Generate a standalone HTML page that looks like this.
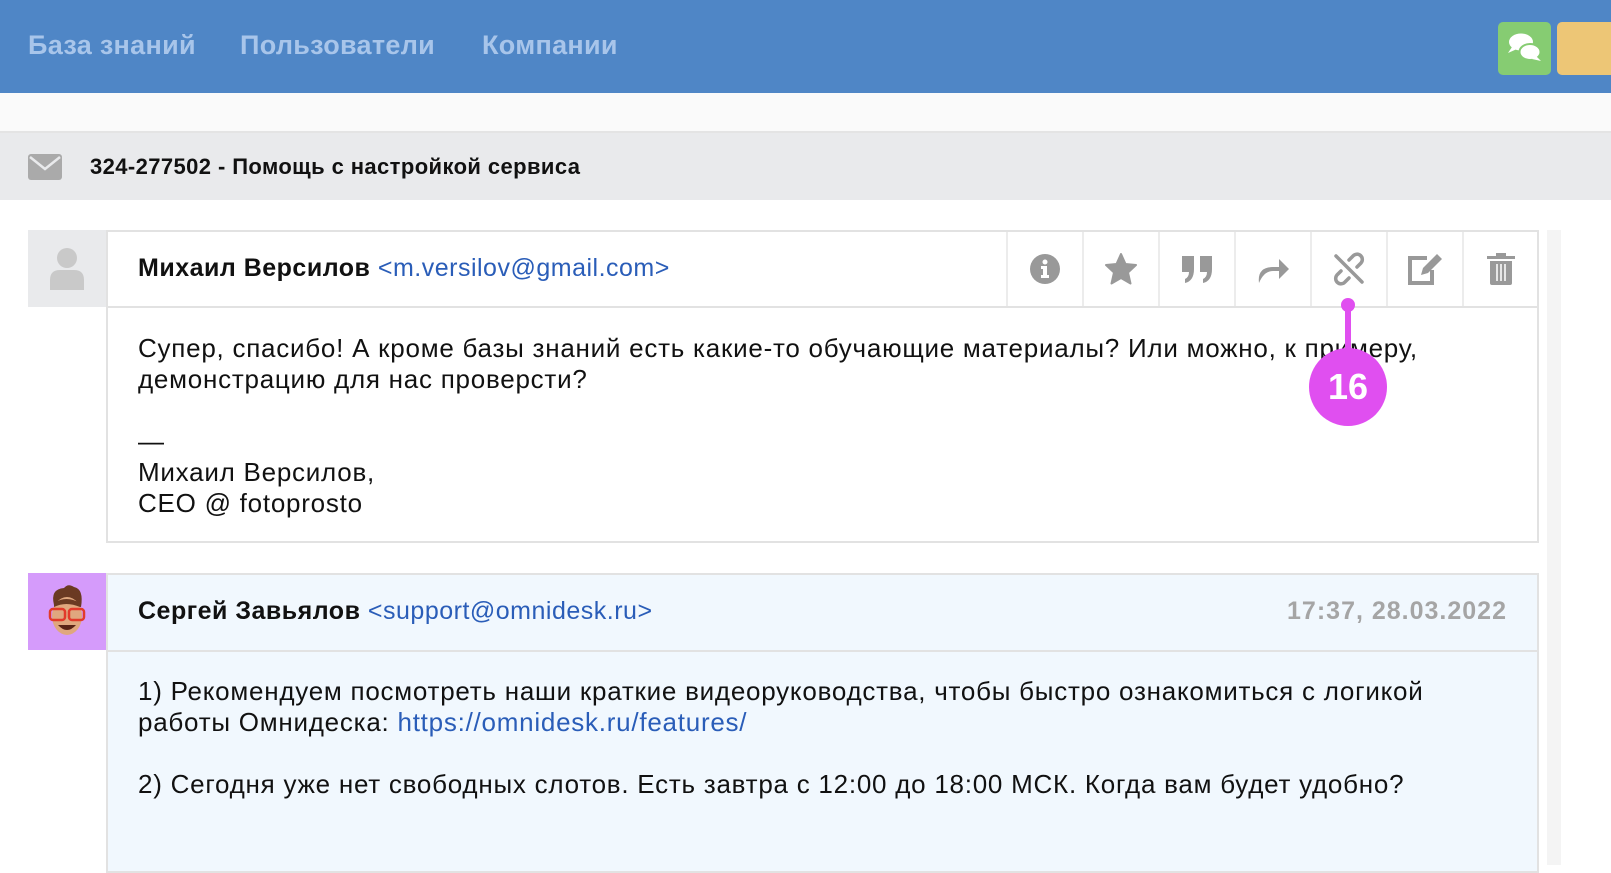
<!DOCTYPE html>
<html><head><meta charset="utf-8"><style>
*{margin:0;padding:0;box-sizing:border-box}
body{width:1611px;height:865px;overflow:hidden;background:#fff;font-family:"Liberation Sans",Roboto,sans-serif;position:relative}
.abs{position:absolute}
.nav{left:0;top:0;width:1611px;height:93px;background:#4f86c6}
.nav span{position:absolute;top:30px;font-size:27px;font-weight:bold;color:#a8c5ea;letter-spacing:0.3px}
.strip{left:0;top:93px;width:1611px;height:40px;background:#fafafa;border-bottom:2px solid #e4e4e4}
.bar{left:0;top:133px;width:1611px;height:67px;background:#e9eaec}
.card{border:2px solid #e2e2e2}
.cell{position:absolute;top:0;width:76px;height:74px;border-left:2px solid #ececec;display:flex;align-items:center;justify-content:center}
.txt{font-size:26px;color:#111;line-height:31px;letter-spacing:0.75px;white-space:nowrap}
a{color:#2a5db8;text-decoration:none}
</style></head><body>
<div class="abs nav">
<span style="left:28px">База знаний</span>
<span style="left:240px">Пользователи</span>
<span style="left:482px">Компании</span>
<div class="abs" style="left:1498px;top:22px;width:53px;height:53px;background:#86cc72;border-radius:5px">
<svg width="53" height="53" viewBox="0 0 53 53"><ellipse cx="23" cy="20" rx="12" ry="8.5" fill="#fff"/><path d="M14 25 L10 31 L19 27Z" fill="#fff"/><ellipse cx="32" cy="30" rx="10.5" ry="8" fill="#fff" stroke="#86cc72" stroke-width="2"/><path d="M38 34 L43 39 L34 37Z" fill="#fff"/></svg></div>
<div class="abs" style="left:1557px;top:22px;width:60px;height:53px;background:#edc676;border-radius:5px"></div>
</div>
<div class="abs strip"></div>
<div class="abs bar">
<svg class="abs" style="left:28px;top:21px" width="34" height="26" viewBox="0 0 34 26"><rect width="34" height="26" rx="3" fill="#aaa"/><path d="M2 3 L17 15 L32 3" stroke="#e9eaec" stroke-width="2.5" fill="none"/></svg>
<div class="abs" style="left:90px;top:21px;font-size:22px;font-weight:bold;color:#111;letter-spacing:0.4px">324-277502 - Помощь с настройкой сервиса</div>
</div>
<div class="abs" style="left:1547px;top:230px;width:14px;height:635px;background:#f4f4f4"></div>

<!-- msg1 -->
<div class="abs" style="left:28px;top:230px;width:78px;height:77px;background:#e9eaec">
<svg class="abs" style="left:20px;top:16px" width="38" height="44" viewBox="0 0 38 44"><circle cx="19" cy="12" r="10" fill="#c9c9c9"/><path d="M2 44 V34 Q2 24 12 24 H26 Q36 24 36 34 V44Z" fill="#c9c9c9"/></svg></div>
<div class="abs card" style="left:106px;top:230px;width:1433px;height:313px;background:#fff">
<div class="abs" style="left:0;top:74px;width:1429px;height:2px;background:#e2e2e2"></div>
<div class="abs" style="left:30px;top:22px;font-size:25px;letter-spacing:0.5px;white-space:nowrap"><b style="color:#111">Михаил Версилов</b> <a>&lt;m.versilov@gmail.com&gt;</a></div>
<div class="cell" style="left:898px"><svg width="32" height="32" viewBox="0 0 32 32"><circle cx="16" cy="16" r="15" fill="#999"/><circle cx="16" cy="9" r="2.5" fill="#fff"/><path d="M12 13h6v9h2v3h-8v-3h2v-6h-2z" fill="#fff"/></svg></div>
<div class="cell" style="left:974px"><svg width="34" height="32" viewBox="0 0 34 32"><path d="M17 1l4.5 10 10.5 1-8 7.5 2.5 11L17 25l-9.5 5.5 2.5-11-8-7.5 10.5-1z" fill="#999" stroke="#999" stroke-linejoin="round" stroke-width="2"/></svg></div>
<div class="cell" style="left:1050px"><svg width="32" height="30" viewBox="0 0 32 30"><path d="M1 2h12v13q0 12-9 14v-4q4-2 4-7H1z M19 2h12v13q0 12-9 14v-4q4-2 4-7h-7z" fill="#999"/></svg></div>
<div class="cell" style="left:1126px"><svg width="32" height="30" viewBox="0 0 32 30"><path d="M2 29q-2-16 14-16h6v-8l10 10-10 10v-8h-6q-9 0-14 12z" fill="#999"/></svg></div>
<div class="cell" style="left:1202px"><svg width="34" height="34" viewBox="0 0 34 34"><path d="M4 4L30 30" stroke="#999" stroke-width="3.5" stroke-linecap="round"/><path d="M17 8l4-4a5 5 0 0 1 8 7l-4 4M17 26l-4 4a5 5 0 0 1-8-7l4-4" stroke="#999" stroke-width="3.5" fill="none" stroke-linecap="round"/></svg></div>
<div class="cell" style="left:1278px"><svg width="36" height="32" viewBox="0 0 36 32"><path d="M20 5H3v25h22V17" stroke="#999" stroke-width="4" fill="none"/><path d="M30 1l5 5-14 14-7 2 2-7z" fill="#999"/></svg></div>
<div class="cell" style="left:1354px"><svg width="28" height="32" viewBox="0 0 28 32"><rect x="0" y="3" width="28" height="3" fill="#999"/><rect x="9" y="0" width="10" height="4" fill="#999"/><path d="M3 8h22v22q0 2-2 2H5q-2 0-2-2z" fill="#999"/><path d="M10 11v17M14 11v17M18 11v17" stroke="#fff" stroke-width="1.5"/></svg></div>
<div class="abs txt" style="left:30px;top:101px">Супер, спасибо! А кроме базы знаний есть какие-то обучающие материалы? Или можно, к примеру,<br>демонстрацию для нас проверсти?<br><br>—<br>Михаил Версилов,<br>CEO @ fotoprosto</div>
</div>

<!-- msg2 -->
<div class="abs" style="left:28px;top:573px;width:78px;height:77px;background:#d59bfb">
<svg class="abs" style="left:18px;top:10px" width="42" height="56" viewBox="0 0 42 56"><path d="M8 22 Q4 6 18 5 Q22 0 28 4 Q38 6 35 24Z" fill="#6b3a22"/><ellipse cx="21" cy="33" rx="15" ry="19" fill="#e0a77e"/><path d="M8 20 Q20 12 34 20 L34 24 Q20 18 8 24Z" fill="#6b3a22"/><rect x="4" y="26" width="15" height="11" rx="3" fill="none" stroke="#e23a2a" stroke-width="2.5"/><rect x="23" y="26" width="15" height="11" rx="3" fill="none" stroke="#e23a2a" stroke-width="2.5"/><path d="M12 42 Q21 52 30 42Z" fill="#5a2416"/></svg></div>
<div class="abs card" style="left:106px;top:573px;width:1433px;height:300px;background:#f1f8fe">
<div class="abs" style="left:0;top:75px;width:1429px;height:2px;background:#e2e2e2"></div>
<div class="abs" style="left:30px;top:22px;font-size:25px;letter-spacing:0.5px;white-space:nowrap"><b style="color:#111">Сергей Завьялов</b> <a>&lt;support@omnidesk.ru&gt;</a></div>
<div class="abs" style="right:30px;top:22px;font-size:25px;font-weight:bold;color:#a5a5a5;letter-spacing:1px">17:37, 28.03.2022</div>
<div class="abs txt" style="left:30px;top:101px">1) Рекомендуем посмотреть наши краткие видеоруководства, чтобы быстро ознакомиться с логикой<br>работы Омнидеска: <a>https://omnidesk.ru/features/</a><br><br>2) Сегодня уже нет свободных слотов. Есть завтра с 12:00 до 18:00 МСК. Когда вам будет удобно?</div>
</div>

<!-- callout -->
<div class="abs" style="left:1345px;top:305px;width:6px;height:70px;background:#e04ff0"></div>
<div class="abs" style="left:1341px;top:298px;width:14px;height:14px;border-radius:50%;background:#e04ff0"></div>
<div class="abs" style="left:1309px;top:348px;width:78px;height:78px;border-radius:50%;background:#e04ff0;color:#fff;font-size:36px;font-weight:bold;text-align:center;line-height:78px">16</div>
</body></html>
